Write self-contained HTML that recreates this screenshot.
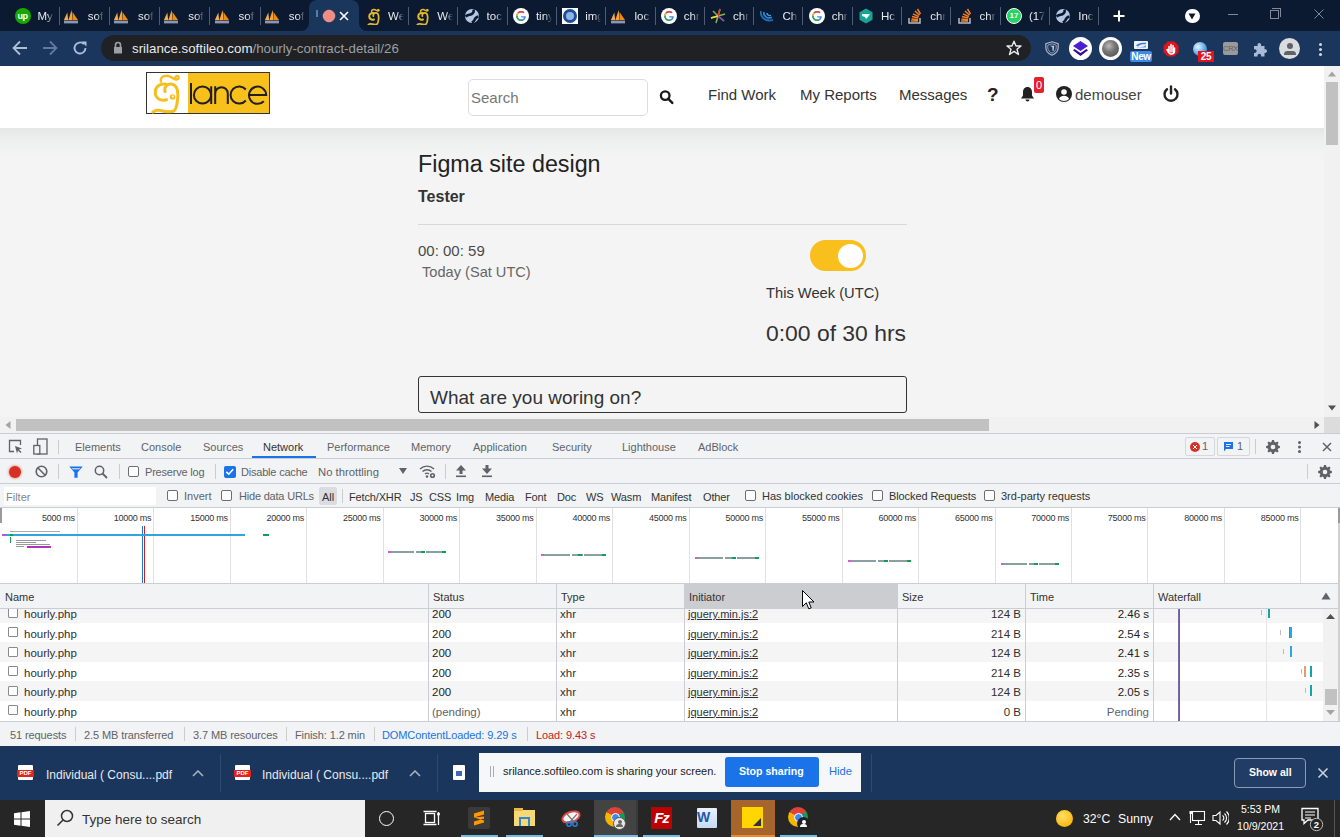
<!DOCTYPE html><html><head><meta charset="utf-8"><style>
*{box-sizing:border-box}
html,body{margin:0;padding:0}
body{width:1340px;height:837px;position:relative;overflow:hidden;font-family:"Liberation Sans",sans-serif;background:#f4f4f4}
.a{position:absolute}
.t{position:absolute;white-space:nowrap;line-height:1}
#tabs{left:0;top:0;width:1340px;height:31px;background:#0b1a31}
#tb{left:0;top:31px;width:1340px;height:35px;background:#1b365d}
#hdr{left:0;top:66px;width:1324px;height:62px;background:#fff}
#content{left:0;top:128px;width:1324px;height:289px;background:#f4f4f4}
#vsb{left:1324px;top:66px;width:16px;height:351px;background:#f1f1f1}
#hsb{left:0;top:417px;width:1340px;height:16px;background:#f1f1f1}
#dt{left:0;top:433px;width:1340px;height:313px;background:#fff}
#dl{left:0;top:746px;width:1340px;height:54px;background:#1b365d}
#task{left:0;top:800px;width:1340px;height:37px;background:#262626}
.sep{position:absolute;top:7px;width:1px;height:18px;background:#4e5d75}
.tl{position:absolute;top:9px;font-size:11.5px;color:#e8eaed;white-space:nowrap;overflow:hidden;line-height:14px;-webkit-mask-image:linear-gradient(to right,#000 55%,transparent 100%)}
</style></head><body>
<div id="tabs" class="a">
<div class="a" style="left:14.5px;top:8px;width:16px;height:16px;border-radius:50%;background:#14a800;color:#fff;font-size:9px;font-weight:bold;line-height:16px;text-align:center;letter-spacing:-0.5px">up</div>
<div class="tl" style="left:37.5px;width:16px">My</div>
<div class="sep" style="left:58.5px"></div>
<svg class="a" style="left:62.75px;top:9px" width="16" height="15" viewBox="0 0 16 15"><path d="M0.8 11.2L4.3 3.5L5.2 11.2Z" fill="#f2ad55"/><path d="M5.3 11.2L8.7 0.8L9.4 11.2Z" fill="#f6a538"/><path d="M9.5 11.2V3L15.2 11.2Z" fill="#ee8a12"/><rect x="1" y="11.8" width="14" height="2.6" fill="#8d97b5"/></svg>
<div class="tl" style="left:87.8px;width:16px">sof</div>
<div class="sep" style="left:108.8px"></div>
<svg class="a" style="left:113.0px;top:9px" width="16" height="15" viewBox="0 0 16 15"><path d="M0.8 11.2L4.3 3.5L5.2 11.2Z" fill="#f2ad55"/><path d="M5.3 11.2L8.7 0.8L9.4 11.2Z" fill="#f6a538"/><path d="M9.5 11.2V3L15.2 11.2Z" fill="#ee8a12"/><rect x="1" y="11.8" width="14" height="2.6" fill="#8d97b5"/></svg>
<div class="tl" style="left:138.0px;width:16px">sof</div>
<div class="sep" style="left:159.0px"></div>
<svg class="a" style="left:163.25px;top:9px" width="16" height="15" viewBox="0 0 16 15"><path d="M0.8 11.2L4.3 3.5L5.2 11.2Z" fill="#f2ad55"/><path d="M5.3 11.2L8.7 0.8L9.4 11.2Z" fill="#f6a538"/><path d="M9.5 11.2V3L15.2 11.2Z" fill="#ee8a12"/><rect x="1" y="11.8" width="14" height="2.6" fill="#8d97b5"/></svg>
<div class="tl" style="left:188.2px;width:16px">sof</div>
<div class="sep" style="left:209.2px"></div>
<svg class="a" style="left:213.5px;top:9px" width="16" height="15" viewBox="0 0 16 15"><path d="M0.8 11.2L4.3 3.5L5.2 11.2Z" fill="#f2ad55"/><path d="M5.3 11.2L8.7 0.8L9.4 11.2Z" fill="#f6a538"/><path d="M9.5 11.2V3L15.2 11.2Z" fill="#ee8a12"/><rect x="1" y="11.8" width="14" height="2.6" fill="#8d97b5"/></svg>
<div class="tl" style="left:238.5px;width:16px">sof</div>
<div class="sep" style="left:259.5px"></div>
<svg class="a" style="left:263.75px;top:9px" width="16" height="15" viewBox="0 0 16 15"><path d="M0.8 11.2L4.3 3.5L5.2 11.2Z" fill="#f2ad55"/><path d="M5.3 11.2L8.7 0.8L9.4 11.2Z" fill="#f6a538"/><path d="M9.5 11.2V3L15.2 11.2Z" fill="#ee8a12"/><rect x="1" y="11.8" width="14" height="2.6" fill="#8d97b5"/></svg>
<div class="tl" style="left:288.8px;width:16px">sof</div>
<svg class="a" style="left:366.5px;top:7.5px" width="13.5" height="17" viewBox="150 72 32 41"><g stroke="#e3b82a" fill="none" stroke-linecap="round"><path d="M161 81.5C160 77.5 163 75.5 167 75.8C171 76.2 173 79 176 79.5C178.5 79.8 179.5 77.5 178 76.3C176.5 75.2 174.8 76.8 175.5 78.8" stroke-width="3.5"/><path d="M165.5 84C159.5 83.2 155 87 155.2 92.8C155.5 98.5 160.5 101.5 166.5 99.8" stroke-width="5"/><path d="M165 91.5C164 86.5 167.5 83.5 171.5 84C176.5 84.8 178.2 90.5 177.8 97C177.4 103 177 107.5 174.5 110.5C171 113.5 164 111 159 110.3C156.5 110 154.5 110.8 153 112" stroke-width="4.2"/></g></svg>
<div class="tl" style="left:388.0px;width:16px">Wel</div>
<div class="sep" style="left:408.0px"></div>
<svg class="a" style="left:415.8px;top:7.5px" width="13.5" height="17" viewBox="150 72 32 41"><g stroke="#e3b82a" fill="none" stroke-linecap="round"><path d="M161 81.5C160 77.5 163 75.5 167 75.8C171 76.2 173 79 176 79.5C178.5 79.8 179.5 77.5 178 76.3C176.5 75.2 174.8 76.8 175.5 78.8" stroke-width="3.5"/><path d="M165.5 84C159.5 83.2 155 87 155.2 92.8C155.5 98.5 160.5 101.5 166.5 99.8" stroke-width="5"/><path d="M165 91.5C164 86.5 167.5 83.5 171.5 84C176.5 84.8 178.2 90.5 177.8 97C177.4 103 177 107.5 174.5 110.5C171 113.5 164 111 159 110.3C156.5 110 154.5 110.8 153 112" stroke-width="4.2"/></g></svg>
<div class="tl" style="left:437.3px;width:16px">Wel</div>
<div class="sep" style="left:457.3px"></div>
<svg class="a" style="left:463.6px;top:8px" width="16" height="16" viewBox="0 0 16 16"><circle cx="8" cy="8" r="7" fill="#b4c6e4"/><path d="M9.5 1.5C10.5 4.5 8 6.5 5.5 6.8C4 7 3 7.5 1.5 8.5" stroke="#0b1a31" stroke-width="2.6" fill="none"/><path d="M14.5 8.5C12 9 11 10.5 10.5 12C10 13.2 9 14 8 14.8" stroke="#0b1a31" stroke-width="2.6" fill="none"/></svg>
<div class="tl" style="left:486.6px;width:16px">toc</div>
<div class="sep" style="left:506.6px"></div>
<svg class="a" style="left:512.9px;top:8px" width="16" height="16" viewBox="0 0 16 16"><circle cx="8" cy="8" r="8" fill="#fff"/><path d="M12.5 8.2H8.2V9.6H11 C10.6 11 9.5 11.6 8.2 11.6 C6.2 11.6 4.6 10 4.6 8 C4.6 6 6.2 4.4 8.2 4.4 C9.1 4.4 9.9 4.7 10.5 5.3L11.5 4.3 C10.6 3.5 9.5 3 8.2 3 C5.4 3 3.2 5.2 3.2 8 C3.2 10.8 5.4 13 8.2 13 C11 13 12.8 11 12.8 8.3Z" fill="#4285f4"/><path d="M3.2 8 C3.2 6.5 3.8 5.2 4.8 4.3L5.8 5.4 C5.1 6 4.6 7 4.6 8Z" fill="#fbbc05"/><path d="M4.8 4.3 C5.7 3.5 6.9 3 8.2 3 C9.5 3 10.6 3.5 11.5 4.3L10.5 5.3 C9.9 4.7 9.1 4.4 8.2 4.4 C7.2 4.4 6.4 4.8 5.8 5.4Z" fill="#ea4335"/><path d="M4.6 8 C4.6 10 6.2 11.6 8.2 11.6 C9.2 11.6 10 11.3 10.6 10.7L11.6 11.6 C10.8 12.5 9.6 13 8.2 13 C5.4 13 3.2 10.8 3.2 8Z" fill="#34a853"/></svg>
<div class="tl" style="left:535.9px;width:16px">tiny</div>
<div class="sep" style="left:555.9px"></div>
<div class="a" style="left:562.2px;top:8px;width:16px;height:16px;background:#fff"><div class="a" style="left:1px;top:1px;width:14px;height:14px;border-radius:50%;background:#1d4e9a"></div><div class="a" style="left:4px;top:4px;width:8px;height:8px;border-radius:50%;background:#8fb5e8"></div></div>
<div class="tl" style="left:585.2px;width:16px">img</div>
<div class="sep" style="left:605.2px"></div>
<svg class="a" style="left:609.5px;top:9px" width="16" height="15" viewBox="0 0 16 15"><path d="M0.8 11.2L4.3 3.5L5.2 11.2Z" fill="#f2ad55"/><path d="M5.3 11.2L8.7 0.8L9.4 11.2Z" fill="#f6a538"/><path d="M9.5 11.2V3L15.2 11.2Z" fill="#ee8a12"/><rect x="1" y="11.8" width="14" height="2.6" fill="#8d97b5"/></svg>
<div class="tl" style="left:634.5px;width:16px">loc</div>
<div class="sep" style="left:654.5px"></div>
<svg class="a" style="left:660.8px;top:8px" width="16" height="16" viewBox="0 0 16 16"><circle cx="8" cy="8" r="8" fill="#fff"/><path d="M12.5 8.2H8.2V9.6H11 C10.6 11 9.5 11.6 8.2 11.6 C6.2 11.6 4.6 10 4.6 8 C4.6 6 6.2 4.4 8.2 4.4 C9.1 4.4 9.9 4.7 10.5 5.3L11.5 4.3 C10.6 3.5 9.5 3 8.2 3 C5.4 3 3.2 5.2 3.2 8 C3.2 10.8 5.4 13 8.2 13 C11 13 12.8 11 12.8 8.3Z" fill="#4285f4"/><path d="M3.2 8 C3.2 6.5 3.8 5.2 4.8 4.3L5.8 5.4 C5.1 6 4.6 7 4.6 8Z" fill="#fbbc05"/><path d="M4.8 4.3 C5.7 3.5 6.9 3 8.2 3 C9.5 3 10.6 3.5 11.5 4.3L10.5 5.3 C9.9 4.7 9.1 4.4 8.2 4.4 C7.2 4.4 6.4 4.8 5.8 5.4Z" fill="#ea4335"/><path d="M4.6 8 C4.6 10 6.2 11.6 8.2 11.6 C9.2 11.6 10 11.3 10.6 10.7L11.6 11.6 C10.8 12.5 9.6 13 8.2 13 C5.4 13 3.2 10.8 3.2 8Z" fill="#34a853"/></svg>
<div class="tl" style="left:683.8px;width:16px">chr</div>
<div class="sep" style="left:703.8px"></div>
<svg class="a" style="left:710.0999999999999px;top:8px" width="16" height="16" viewBox="0 0 16 16"><path d="M8 8 L3 3 M8 8 L10 1 M8 8 L15 6 M8 8 L14 13 M8 8 L6 15 M8 8 L1 10" stroke-width="1.6" stroke="#7cb342"/><path d="M8 8 L10 1" stroke="#e53935" stroke-width="1.6"/><path d="M8 8 L14 13" stroke="#8e44ad" stroke-width="1.6"/><path d="M8 8 L1 10" stroke="#fdd835" stroke-width="1.6"/></svg>
<div class="tl" style="left:733.1px;width:16px">chr</div>
<div class="sep" style="left:753.1px"></div>
<svg class="a" style="left:759.4px;top:8px" width="16" height="16" viewBox="0 0 16 16"><path d="M2 3 C1 9 6 14 14 12" stroke="#1f6fb5" stroke-width="1.8" fill="none"/><path d="M5 4 C4 8 8 11 13 9.5" stroke="#2b88d8" stroke-width="1.6" fill="none"/><path d="M8 5 C8 7 10 8 12 7.5" stroke="#3aa0e8" stroke-width="1.4" fill="none"/></svg>
<div class="tl" style="left:782.4px;width:16px">Ch</div>
<div class="sep" style="left:802.4px"></div>
<svg class="a" style="left:808.7px;top:8px" width="16" height="16" viewBox="0 0 16 16"><circle cx="8" cy="8" r="8" fill="#fff"/><path d="M12.5 8.2H8.2V9.6H11 C10.6 11 9.5 11.6 8.2 11.6 C6.2 11.6 4.6 10 4.6 8 C4.6 6 6.2 4.4 8.2 4.4 C9.1 4.4 9.9 4.7 10.5 5.3L11.5 4.3 C10.6 3.5 9.5 3 8.2 3 C5.4 3 3.2 5.2 3.2 8 C3.2 10.8 5.4 13 8.2 13 C11 13 12.8 11 12.8 8.3Z" fill="#4285f4"/><path d="M3.2 8 C3.2 6.5 3.8 5.2 4.8 4.3L5.8 5.4 C5.1 6 4.6 7 4.6 8Z" fill="#fbbc05"/><path d="M4.8 4.3 C5.7 3.5 6.9 3 8.2 3 C9.5 3 10.6 3.5 11.5 4.3L10.5 5.3 C9.9 4.7 9.1 4.4 8.2 4.4 C7.2 4.4 6.4 4.8 5.8 5.4Z" fill="#ea4335"/><path d="M4.6 8 C4.6 10 6.2 11.6 8.2 11.6 C9.2 11.6 10 11.3 10.6 10.7L11.6 11.6 C10.8 12.5 9.6 13 8.2 13 C5.4 13 3.2 10.8 3.2 8Z" fill="#34a853"/></svg>
<div class="tl" style="left:831.7px;width:16px">chr</div>
<div class="sep" style="left:851.7px"></div>
<svg class="a" style="left:858.0px;top:8px" width="16" height="16" viewBox="0 0 16 16"><path d="M8 0.5 L14.5 4.2 V11.8 L8 15.5 L1.5 11.8 V4.2Z" fill="#1aa394"/><path d="M4 6 H12 L10 9 L8 11 L7 9 L4 8Z" fill="#e8fff8"/></svg>
<div class="tl" style="left:881.0px;width:16px">Hc</div>
<div class="sep" style="left:901.0px"></div>
<svg class="a" style="left:907.3px;top:8px" width="16" height="16" viewBox="0 0 16 16"><path d="M2 10 V15 H13 V10" stroke="#bcbbbb" stroke-width="1.5" fill="none"/><path d="M4 13 H11 M4.5 11 L11 11.7 M5 8.5 L11.3 10 M6 5.8 L11.8 8.7 M8 3 L12.5 7.3 M10.5 1 L13.5 6" stroke="#f48024" stroke-width="1.5"/></svg>
<div class="tl" style="left:930.3px;width:16px">chr</div>
<div class="sep" style="left:950.3px"></div>
<svg class="a" style="left:956.5999999999999px;top:8px" width="16" height="16" viewBox="0 0 16 16"><path d="M2 10 V15 H13 V10" stroke="#bcbbbb" stroke-width="1.5" fill="none"/><path d="M4 13 H11 M4.5 11 L11 11.7 M5 8.5 L11.3 10 M6 5.8 L11.8 8.7 M8 3 L12.5 7.3 M10.5 1 L13.5 6" stroke="#f48024" stroke-width="1.5"/></svg>
<div class="tl" style="left:979.6px;width:16px">chr</div>
<div class="sep" style="left:999.6px"></div>
<div class="a" style="left:1005.9000000000001px;top:8px;width:16px;height:16px;border-radius:50%;background:#25d366;border:1.5px solid #fff;color:#fff;font-size:8px;font-weight:bold;line-height:13px;text-align:center">17</div>
<div class="tl" style="left:1028.9px;width:16px">(17</div>
<div class="sep" style="left:1048.9px"></div>
<svg class="a" style="left:1055.1999999999998px;top:8px" width="16" height="16" viewBox="0 0 16 16"><circle cx="8" cy="8" r="7" fill="#b4c6e4"/><path d="M9.5 1.5C10.5 4.5 8 6.5 5.5 6.8C4 7 3 7.5 1.5 8.5" stroke="#0b1a31" stroke-width="2.6" fill="none"/><path d="M14.5 8.5C12 9 11 10.5 10.5 12C10 13.2 9 14 8 14.8" stroke="#0b1a31" stroke-width="2.6" fill="none"/></svg>
<div class="tl" style="left:1078.2px;width:16px">Inc</div>
<div class="sep" style="left:1098.2px"></div>
<div class="a" style="left:309px;top:0;width:50px;height:31px;background:#1b365d;border-radius:8px 8px 0 0"></div>
<div class="a" style="left:301px;top:23px;width:8px;height:8px;background:#1b365d"><div class="a" style="left:0;top:0;width:8px;height:8px;background:#0b1a31;border-radius:0 0 8px 0"></div></div>
<div class="a" style="left:359px;top:23px;width:8px;height:8px;background:#1b365d"><div class="a" style="left:0;top:0;width:8px;height:8px;background:#0b1a31;border-radius:0 0 0 8px"></div></div>
<div class="a" style="left:316px;top:10px;width:2px;height:7px;background:#6f9ccf;opacity:.7"></div>
<div class="a" style="left:323px;top:10px;width:12px;height:12px;border-radius:50%;background:#f28b82;border:1.5px solid #e8a0a0;box-shadow:0 0 0 0.5px #a05050"></div>
<svg class="a" style="left:339px;top:11px" width="10" height="10" viewBox="0 0 10 10"><path d="M1 1L9 9M9 1L1 9" stroke="#fff" stroke-width="1.6"/></svg>
<svg class="a" style="left:1113px;top:10px" width="12" height="12" viewBox="0 0 12 12"><path d="M6 0.5V11.5M0.5 6H11.5" stroke="#fff" stroke-width="2"/></svg>
<div class="a" style="left:1185px;top:8.5px;width:14.5px;height:14.5px;border-radius:50%;background:#fff"></div>
<svg class="a" style="left:1188.2px;top:13px" width="8" height="7" viewBox="0 0 8 7"><path d="M0.5 0.5H7.5L4 6.5Z" fill="#0b1a31"/></svg>
<div class="a" style="left:1228px;top:14px;width:10px;height:1px;background:#7f8999"></div>
<div class="a" style="left:1270px;top:10px;width:9px;height:9px;border:1px solid #7f8999"></div><div class="a" style="left:1272px;top:8px;width:9px;height:9px;border-top:1px solid #7f8999;border-right:1px solid #7f8999"></div>
<svg class="a" style="left:1313.5px;top:8.5px" width="10" height="10" viewBox="0 0 10 10"><path d="M0.5 0.5L9.5 9.5M9.5 0.5L0.5 9.5" stroke="#7f8999" stroke-width="1"/></svg>
</div>
<div id="tb" class="a">
<svg class="a" style="left:12px;top:9px" width="16" height="16" viewBox="0 0 16 16"><path d="M15 8H2M8 1.5L1.5 8L8 14.5" stroke="#aebfd8" stroke-width="1.8" fill="none"/></svg>
<svg class="a" style="left:42px;top:9px" width="16" height="16" viewBox="0 0 16 16"><path d="M1 8H14M8 1.5L14.5 8L8 14.5" stroke="#5f7a9e" stroke-width="1.8" fill="none"/></svg>
<svg class="a" style="left:72px;top:9px" width="16" height="16" viewBox="0 0 16 16"><path d="M13.5 8A5.5 5.5 0 1 1 11.9 4.1" stroke="#aebfd8" stroke-width="1.8" fill="none"/><path d="M9.5 1.5H14.5V6.5Z" fill="#aebfd8"/></svg>
<div class="a" style="left:101px;top:4px;width:930px;height:26px;border-radius:13px;background:#202124"></div>
<svg class="a" style="left:113px;top:10px" width="10" height="13" viewBox="0 0 10 13"><path d="M2.5 6V4A2.5 2.5 0 0 1 7.5 4V6" stroke="#9aa0a6" stroke-width="1.6" fill="none"/><rect x="1" y="6" width="8" height="6.5" fill="#9aa0a6"/></svg>
<div class="t" style="left:132px;top:11px;font-size:13.3px;color:#e8eaed">srilance.softileo.com<span style="color:#9aa0a6">/hourly-contract-detail/26</span></div>
<svg class="a" style="left:1006px;top:9px" width="16" height="16" viewBox="0 0 16 16"><path d="M8 1.2L10 6H15L11 9.2L12.5 14.5L8 11.4L3.5 14.5L5 9.2L1 6H6Z" stroke="#e8eaed" stroke-width="1.4" fill="none" stroke-linejoin="round"/></svg>
<svg class="a" style="left:1044.5px;top:10px" width="14" height="15" viewBox="0 0 14 15"><path d="M7 0.8L13.2 2.8V6.5C13.2 10 10.5 12.8 7 14.3C3.5 12.8 0.8 10 0.8 6.5V2.8Z" stroke="#aeb6c4" stroke-width="1.2" fill="none"/><path d="M7 2.8L11.2 4.1V6.8C11.2 9.2 9.4 11.1 7 12.2C4.6 11.1 2.8 9.2 2.8 6.8V4.1Z" stroke="#aeb6c4" stroke-width="0.8" fill="none"/><path d="M4.8 4.8H9.2L8.6 10H7.6L7.3 6Z" fill="#c8ced8"/></svg>
<div class="a" style="left:1069px;top:6px;width:23px;height:23px;border-radius:50%;background:#fff"></div>
<svg class="a" style="left:1072px;top:10px" width="17" height="16" viewBox="0 0 17 16"><path d="M8.5 0L16 5L8.5 10L1 5Z" fill="#4b1fd0"/><path d="M2.5 8L8.5 12L14.5 8L16 9.3L8.5 15L1 9.3Z" fill="#2e0f9c"/></svg>
<div class="a" style="left:1099px;top:6px;width:23px;height:23px;border-radius:50%;background:#fff"></div>
<div class="a" style="left:1102px;top:9px;width:17px;height:17px;border-radius:50%;background:radial-gradient(circle at 40% 35%,#bbb 0,#777 40%,#555 80%,#888 100%)"></div>
<div class="a" style="left:1134px;top:10px;width:14px;height:8px;border-radius:1px;background:#eef3fb"></div>
<svg class="a" style="left:1134px;top:10px" width="14" height="8" viewBox="0 0 14 8"><path d="M2 4.5C5 1 10 2 12 1.5V3C9 3.5 6 3 4 5.5Z" fill="#3b7ddd"/><path d="M2 6.5C6 6 9 6.5 12 4V6.5Z" fill="#6aa0e8"/></svg>
<div class="a" style="left:1130px;top:19.5px;width:22px;height:11px;border-radius:2px;background:#3d8ae8;color:#fff;font-size:10px;font-weight:bold;line-height:11px;text-align:center;letter-spacing:-0.4px">New</div>
<svg class="a" style="left:1163px;top:9.5px" width="16" height="16" viewBox="0 0 16 16"><path d="M4.7 0.5H11.3L15.5 4.7V11.3L11.3 15.5H4.7L0.5 11.3V4.7Z" fill="#e0121b"/><path d="M6 11.5V5.5M8 11V3.5M10 11V4.5M6 9C5 8.5 4.3 8 4 8.8C5 10.5 6 13 8.5 13C10.5 13 11.5 11.5 11.5 10V7" stroke="#fff" stroke-width="1.5" fill="none" stroke-linecap="round"/></svg>
<div class="a" style="left:1193px;top:11px;width:14px;height:14px;border-radius:50%;background:radial-gradient(circle at 35% 35%,#e8f4ff,#5aa8e8 55%,#1f6fb0)"></div>
<div class="a" style="left:1198px;top:19.5px;width:16px;height:11px;background:#e2141f;color:#fff;font-size:10px;font-weight:bold;line-height:11px;text-align:center;letter-spacing:-0.3px">25</div>
<div class="a" style="left:1223px;top:11px;width:15px;height:13px;background:#9a9a9a;border-radius:2px;color:#5f5f5f;font-size:7.5px;line-height:13px;text-align:center;letter-spacing:-0.3px">CRX</div>
<svg class="a" style="left:1253px;top:10.5px" width="15" height="15" viewBox="0 0 15 15"><path d="M1 4H4.5V2.8A1.8 1.8 0 0 1 8.1 2.8V4H11.5V7.3H12.3A1.8 1.8 0 0 1 12.3 10.9H11.5V14.5H8.1V13.6A1.8 1.8 0 0 0 4.5 13.6V14.5H1V10.9H1.9A1.8 1.8 0 0 0 1.9 7.3H1Z" fill="#a8bcd8"/></svg>
<div class="a" style="left:1279px;top:7px;width:21px;height:21px;border-radius:50%;background:#dadce0;overflow:hidden"><div class="a" style="left:7.5px;top:5px;width:6px;height:6px;border-radius:50%;background:#5f6368"></div><div class="a" style="left:4.5px;top:12.5px;width:12px;height:4.5px;border-radius:6px 6px 1px 1px;background:#5f6368"></div></div>
<div class="a" style="left:1318.5px;top:11.5px;width:3px;height:3px;border-radius:50%;background:#cfd8e6;box-shadow:0 5px 0 #cfd8e6,0 10px 0 #cfd8e6"></div>
</div>
<div id="hdr" class="a"></div>
<div id="content" class="a" style="background:linear-gradient(#e5e6e6 0,#ebecec 8px,#f0f1f1 18px,#f4f4f4 32px)"></div>
<div class="a" style="left:146px;top:72px;width:124px;height:42px;border:1px solid #333;background:#fff"></div>
<div class="a" style="left:188px;top:73px;width:81px;height:40px;background:#f8c01a"></div>
<svg class="a" style="left:146px;top:72px" width="124" height="42" viewBox="146 72 124 42"><g stroke="#f5bf22" fill="none" stroke-linecap="round"><path d="M161 81.5C160 77.5 163 75.5 167 75.8C171 76.2 173 79 176 79.5C178.5 79.8 179.5 77.5 178 76.3C176.5 75.2 174.8 76.8 175.5 78.8" stroke-width="2.4"/><path d="M165.5 84C159.5 83.2 155 87 155.2 92.8C155.5 98.5 160.5 101.5 166.5 99.8" stroke-width="3"/><path d="M165 91.5C164 86.5 167.5 83.5 171.5 84C176.5 84.8 178.2 90.5 177.8 97C177.4 103 177 107.5 174.5 110.5C171 113.5 164 111 159 110.3C156.5 110 154.5 110.8 153 112" stroke-width="3.1"/></g><circle cx="172.5" cy="97" r="2.8" fill="#f5bf22"/><circle cx="172.8" cy="96.6" r="1" fill="#fff"/></svg>
<svg class="a" style="left:188px;top:73px" width="81" height="40" viewBox="188 73 81 40"><g stroke="#231f20" stroke-width="2" fill="none"><path d="M191 83V104"/><circle cx="202.5" cy="95" r="8.6"/><path d="M211.2 86.3V104"/><path d="M215.2 104V86.3M215.2 93.5A6.3 6.3 0 0 1 227.8 93.5V104"/><path d="M245.8 89.5A8.6 8.6 0 1 0 245.8 100.5"/><path d="M249.5 95H266.2A8.6 8.6 0 1 0 263.8 101.2"/></g></svg>
<div class="a" style="left:468px;top:79px;width:180px;height:37px;border:1px solid #dcdcdc;border-radius:5px;background:#fff"></div>
<div class="t" style="left:471px;top:90px;font-size:15px;color:#777">Search</div>
<svg class="a" style="left:658px;top:89px" width="17" height="17" viewBox="0 0 17 17"><circle cx="7.2" cy="6.6" r="4.3" stroke="#1a1a1a" stroke-width="2.3" fill="none"/><path d="M10.3 9.8L14.3 13.8" stroke="#1a1a1a" stroke-width="2.5" stroke-linecap="round"/></svg>
<div class="t" style="left:708px;top:87px;font-size:15px;color:#333">Find Work</div>
<div class="t" style="left:800px;top:87px;font-size:15px;color:#333">My Reports</div>
<div class="t" style="left:899px;top:87px;font-size:15px;color:#333">Messages</div>
<div class="t" style="left:987px;top:85px;font-size:19px;font-weight:bold;color:#222">?</div>
<svg class="a" style="left:1020px;top:86px" width="15" height="16" viewBox="0 0 15 16"><path d="M7.5 1 C4.5 1 3 3.5 3 6 V9.5 L1 12.5 H14 L12 9.5 V6 C12 3.5 10.5 1 7.5 1Z" fill="#222"/><path d="M5.5 13.5 A2 2 0 0 0 9.5 13.5Z" fill="#222"/></svg>
<div class="a" style="left:1034px;top:77px;width:10px;height:16px;background:#e5202d;border-radius:2px;color:#fff;font-size:11px;line-height:16px;text-align:center">0</div>
<svg class="a" style="left:1056px;top:86px" width="16" height="16" viewBox="0 0 16 16"><circle cx="8" cy="8" r="8" fill="#222"/><circle cx="8" cy="6" r="2.8" fill="#fff"/><path d="M3 12.8 C4 10.5 6 9.8 8 9.8 C10 9.8 12 10.5 13 12.8 C11.8 14.2 10 15 8 15 C6 15 4.2 14.2 3 12.8Z" fill="#fff"/></svg>
<div class="t" style="left:1075px;top:87px;font-size:15px;color:#444">demouser</div>
<svg class="a" style="left:1162px;top:85px" width="18" height="18" viewBox="0 0 18 18"><path d="M5 4.2 A6.5 6.5 0 1 0 13 4.2" stroke="#222" stroke-width="2.4" fill="none" stroke-linecap="round"/><path d="M9 1.5V8.5" stroke="#222" stroke-width="2.4" stroke-linecap="round"/></svg>
<div class="t" style="left:418px;top:153px;font-size:23.3px;color:#222">Figma site design</div>
<div class="t" style="left:418px;top:189px;font-size:16px;font-weight:bold;color:#333">Tester</div>
<div class="a" style="left:418px;top:224px;width:489px;height:1px;background:#d8d8d8"></div>
<div class="t" style="left:418px;top:243px;font-size:15px;color:#4a4a4a">00: 00: 59</div>
<div class="t" style="left:418px;top:265px;font-size:14.6px;color:#666">&nbsp;Today (Sat UTC)</div>
<div class="a" style="left:810px;top:240px;width:56px;height:31px;border-radius:16px;background:#f8bf1d"></div>
<div class="a" style="left:838px;top:243.5px;width:24.5px;height:24px;border-radius:50%;background:#fff"></div>
<div class="t" style="left:766px;top:286px;font-size:14.7px;color:#333">This Week (UTC)</div>
<div class="t" style="left:766px;top:322px;font-size:22.9px;color:#333">0:00 of 30 hrs</div>
<div class="a" style="left:418px;top:376px;width:489px;height:37px;border:1px solid #333;border-radius:3px;background:#f4f4f4"></div>
<div class="t" style="left:430px;top:388px;font-size:19px;color:#333">What are you woring on?</div>
<div id="vsb" class="a"></div>
<svg class="a" style="left:1327px;top:71px" width="10" height="6" viewBox="0 0 10 6"><path d="M5 0.5L9 5.5H1Z" fill="#a3a3a3"/></svg>
<div class="a" style="left:1326px;top:82px;width:12px;height:63px;background:#c1c1c1"></div>
<svg class="a" style="left:1327px;top:405px" width="10" height="6" viewBox="0 0 10 6"><path d="M5 5.5L9 0.5H1Z" fill="#505050"/></svg>
<div id="hsb" class="a"></div>
<svg class="a" style="left:5px;top:420px" width="6" height="10" viewBox="0 0 6 10"><path d="M0.5 5L5.5 1V9Z" fill="#a3a3a3"/></svg>
<div class="a" style="left:16px;top:419px;width:973px;height:12px;background:#c1c1c1"></div>
<svg class="a" style="left:1314px;top:420px" width="6" height="10" viewBox="0 0 6 10"><path d="M5.5 5L0.5 1V9Z" fill="#505050"/></svg>
<div class="a" style="left:1324px;top:417px;width:16px;height:16px;background:#dcdcdc"></div>
<div class="a" style="left:0;top:433px;width:1340px;height:313px;background:#fff"></div>
<div class="a" style="left:0;top:433px;width:1340px;height:26px;background:#f1f3f4;border-top:1px solid #cacdd1;border-bottom:1px solid #cacdd1"></div>
<svg class="a" style="left:8px;top:439px" width="15" height="15" viewBox="0 0 15 15"><path d="M6 12.5H1.5V1.5H12.5V6" stroke="#5f6368" stroke-width="1.3" fill="none"/><path d="M7 7L14 9.5L11 10.5L13.5 13L12.5 14L10 11.5L9 14.5Z" fill="#5f6368"/></svg>
<svg class="a" style="left:33px;top:438px" width="15" height="17" viewBox="0 0 15 17"><rect x="4.5" y="1" width="9.5" height="15" stroke="#5f6368" stroke-width="1.3" fill="none"/><rect x="0.8" y="7.5" width="6" height="8.5" stroke="#5f6368" stroke-width="1.3" fill="#f1f3f4"/></svg>
<div class="a" style="left:58px;top:440px;width:1px;height:14px;background:#ccc"></div>
<div class="t" style="left:75px;top:442px;font-size:11px;color:#5f6368">Elements</div>
<div class="t" style="left:141px;top:442px;font-size:11px;color:#5f6368">Console</div>
<div class="t" style="left:203px;top:442px;font-size:11px;color:#5f6368">Sources</div>
<div class="t" style="left:263px;top:442px;font-size:11px;color:#333">Network</div>
<div class="t" style="left:327px;top:442px;font-size:11px;color:#5f6368">Performance</div>
<div class="t" style="left:411px;top:442px;font-size:11px;color:#5f6368">Memory</div>
<div class="t" style="left:473px;top:442px;font-size:11px;color:#5f6368">Application</div>
<div class="t" style="left:552px;top:442px;font-size:11px;color:#5f6368">Security</div>
<div class="t" style="left:622px;top:442px;font-size:11px;color:#5f6368">Lighthouse</div>
<div class="t" style="left:698px;top:442px;font-size:11px;color:#5f6368">AdBlock</div>
<div class="a" style="left:252px;top:456px;width:64px;height:2px;background:#1a73e8"></div>
<div class="a" style="left:1185px;top:437px;width:30px;height:19px;border:1px solid #d5d7da;border-radius:2px"></div>
<div class="a" style="left:1190px;top:442px;width:10px;height:10px;border-radius:50%;background:#d93025"></div>
<svg class="a" style="left:1192px;top:444px" width="6" height="6" viewBox="0 0 6 6"><path d="M1 1L5 5M5 1L1 5" stroke="#fff" stroke-width="1"/></svg>
<div class="t" style="left:1202px;top:441px;font-size:11px;color:#5f6368">1</div>
<div class="a" style="left:1217px;top:437px;width:33px;height:19px;border:1px solid #d5d7da;border-radius:2px"></div>
<svg class="a" style="left:1223px;top:441px" width="11" height="11" viewBox="0 0 11 11"><path d="M1 1H10V8H3L1 10.5Z" fill="#1a73e8"/><path d="M3 3.5H8M3 5.5H6.5" stroke="#fff" stroke-width="0.9"/></svg>
<div class="t" style="left:1237px;top:441px;font-size:11px;color:#5f6368">1</div>
<div class="a" style="left:1255px;top:439px;width:1px;height:15px;background:#ccc"></div>
<svg class="a" style="left:1266px;top:440px" width="14" height="14" viewBox="0 0 14 14"><path d="M6 0.5H8L8.4 2.3L9.6 2.9L11.2 1.9L12.6 3.3L11.6 4.9L12.1 6.1L13.9 6.5V8.5L12.1 8.9L11.6 10.1L12.6 11.7L11.2 13.1L9.6 12.1L8.4 12.7L8 14.5H6L5.6 12.7L4.4 12.1L2.8 13.1L1.4 11.7L2.4 10.1L1.9 8.9L0.1 8.5V6.5L1.9 6.1L2.4 4.9L1.4 3.3L2.8 1.9L4.4 2.9L5.6 2.3Z" fill="#5f6368" transform="translate(0,-0.5)"/><circle cx="7" cy="7" r="2.3" fill="#f1f3f4"/></svg>
<div class="a" style="left:1298px;top:441px;width:3px;height:3px;border-radius:50%;background:#5f6368;box-shadow:0 4.5px 0 #5f6368,0 9px 0 #5f6368"></div>
<svg class="a" style="left:1322px;top:442px" width="10" height="10" viewBox="0 0 10 10"><path d="M1 1L9 9M9 1L1 9" stroke="#5f6368" stroke-width="1.5"/></svg>
<div class="a" style="left:0;top:459px;width:1340px;height:25px;background:#f1f3f4;border-bottom:1px solid #cacdd1"></div>
<div class="a" style="left:9px;top:466px;width:12px;height:12px;border-radius:50%;background:#d93025;box-shadow:0 0 2px 1px rgba(217,48,37,.35)"></div>
<svg class="a" style="left:35px;top:465px" width="13" height="13" viewBox="0 0 13 13"><circle cx="6.5" cy="6.5" r="5.3" stroke="#5f6368" stroke-width="1.6" fill="none"/><path d="M2.8 2.8L10.2 10.2" stroke="#5f6368" stroke-width="1.6"/></svg>
<div class="a" style="left:58px;top:464px;width:1px;height:15px;background:#ccc"></div>
<svg class="a" style="left:69px;top:466px" width="14" height="13" viewBox="0 0 14 13"><path d="M0.3 0.5H13.7L8.6 6.5V11.8L5.4 11.8V6.5Z" fill="#1a73e8"/><path d="M2.6 2H11.4L10.3 3.5H3.7Z" fill="#a8c7fa"/></svg>
<svg class="a" style="left:94px;top:465px" width="14" height="14" viewBox="0 0 14 14"><circle cx="5.5" cy="5.5" r="4.2" stroke="#5f6368" stroke-width="1.5" fill="none"/><path d="M8.5 8.5L13 13" stroke="#5f6368" stroke-width="1.8"/></svg>
<div class="a" style="left:119px;top:464px;width:1px;height:15px;background:#ccc"></div>
<div class="a" style="left:128px;top:466px;width:11px;height:11px;border-radius:2px;border:1px solid #6e6e6e;background:#fff"></div>
<div class="t" style="left:145px;top:467px;font-size:11px;color:#5f6368;letter-spacing:-0.2px">Preserve log</div>
<div class="a" style="left:215px;top:464px;width:1px;height:15px;background:#ccc"></div>
<div class="a" style="left:224px;top:466px;width:11.5px;height:11.5px;border-radius:2px;background:#1a73e8"></div><svg class="a" style="left:224px;top:466px" width="12" height="12" viewBox="0 0 12 12"><path d="M2.3 5.8L4.8 8.2L9.2 3.3" stroke="#fff" stroke-width="1.6" fill="none"/></svg>
<div class="t" style="left:241px;top:467px;font-size:11px;color:#5f6368;letter-spacing:-0.2px">Disable cache</div>
<div class="t" style="left:318px;top:467px;font-size:11.3px;color:#5f6368">No throttling</div>
<svg class="a" style="left:399px;top:468px" width="8" height="6" viewBox="0 0 8 6"><path d="M0 0H8L4 6Z" fill="#5f6368"/></svg>
<svg class="a" style="left:419px;top:464px" width="17" height="15" viewBox="0 0 17 15"><path d="M1 5A10 10 0 0 1 15 5M3.5 7.5A6.5 6.5 0 0 1 12.5 7.5M6 10A3 3 0 0 1 10 10" stroke="#5f6368" stroke-width="1.4" fill="none"/><circle cx="8" cy="12.5" r="1.3" fill="#5f6368"/><circle cx="13.5" cy="11.5" r="2.6" fill="#5f6368"/><circle cx="13.5" cy="11.5" r="1" fill="#f1f3f4"/></svg>
<div class="a" style="left:445px;top:464px;width:1px;height:15px;background:#ccc"></div>
<svg class="a" style="left:455px;top:464px" width="12" height="14" viewBox="0 0 12 14"><path d="M6 1L11 6.5H7.5V10H4.5V6.5H1Z" fill="#5f6368"/><rect x="1" y="11.5" width="10" height="1.6" fill="#5f6368"/></svg>
<svg class="a" style="left:481px;top:464px" width="12" height="14" viewBox="0 0 12 14"><path d="M6 10L11 4.5H7.5V1H4.5V4.5H1Z" fill="#5f6368"/><rect x="1" y="11.5" width="10" height="1.6" fill="#5f6368"/></svg>
<div class="a" style="left:1307px;top:464px;width:1px;height:15px;background:#ccc"></div>
<svg class="a" style="left:1318px;top:465px" width="14" height="14" viewBox="0 0 14 14"><path d="M6 0.5H8L8.4 2.3L9.6 2.9L11.2 1.9L12.6 3.3L11.6 4.9L12.1 6.1L13.9 6.5V8.5L12.1 8.9L11.6 10.1L12.6 11.7L11.2 13.1L9.6 12.1L8.4 12.7L8 14.5H6L5.6 12.7L4.4 12.1L2.8 13.1L1.4 11.7L2.4 10.1L1.9 8.9L0.1 8.5V6.5L1.9 6.1L2.4 4.9L1.4 3.3L2.8 1.9L4.4 2.9L5.6 2.3Z" fill="#5f6368" transform="translate(0,-0.5)"/><circle cx="7" cy="7" r="2.3" fill="#f1f3f4"/></svg>
<div class="a" style="left:0;top:484px;width:1340px;height:24px;background:#f1f3f4;border-bottom:1px solid #cacdd1"></div>
<div class="a" style="left:4px;top:487px;width:152px;height:18px;background:#fff"></div>
<div class="t" style="left:6px;top:492px;font-size:11px;color:#80868b">Filter</div>
<div class="a" style="left:167px;top:490px;width:11px;height:11px;border-radius:2px;border:1px solid #6e6e6e;background:#fff"></div>
<div class="t" style="left:184px;top:491px;font-size:11px;color:#5f6368">Invert</div>
<div class="a" style="left:221px;top:490px;width:11px;height:11px;border-radius:2px;border:1px solid #6e6e6e;background:#fff"></div>
<div class="t" style="left:239px;top:491px;font-size:11px;color:#5f6368;letter-spacing:-0.2px">Hide data URLs</div>
<div class="a" style="left:319px;top:487px;width:18px;height:18px;border-radius:2px;background:#dadce0"></div>
<div class="t" style="left:322px;top:492px;font-size:11px;color:#333">All</div>
<div class="a" style="left:342px;top:489px;width:1px;height:14px;background:#ccc"></div>
<div class="t" style="left:349px;top:492px;font-size:11px;color:#333;letter-spacing:-0.15px">Fetch/XHR</div>
<div class="t" style="left:410px;top:492px;font-size:11px;color:#333;letter-spacing:-0.15px">JS</div>
<div class="t" style="left:429px;top:492px;font-size:11px;color:#333;letter-spacing:-0.15px">CSS</div>
<div class="t" style="left:456px;top:492px;font-size:11px;color:#333;letter-spacing:-0.15px">Img</div>
<div class="t" style="left:485px;top:492px;font-size:11px;color:#333;letter-spacing:-0.15px">Media</div>
<div class="t" style="left:525px;top:492px;font-size:11px;color:#333;letter-spacing:-0.15px">Font</div>
<div class="t" style="left:557px;top:492px;font-size:11px;color:#333;letter-spacing:-0.15px">Doc</div>
<div class="t" style="left:586px;top:492px;font-size:11px;color:#333;letter-spacing:-0.15px">WS</div>
<div class="t" style="left:611px;top:492px;font-size:11px;color:#333;letter-spacing:-0.15px">Wasm</div>
<div class="t" style="left:651px;top:492px;font-size:11px;color:#333;letter-spacing:-0.15px">Manifest</div>
<div class="t" style="left:703px;top:492px;font-size:11px;color:#333;letter-spacing:-0.15px">Other</div>
<div class="a" style="left:745px;top:490px;width:11px;height:11px;border-radius:2px;border:1px solid #6e6e6e;background:#fff"></div>
<div class="t" style="left:762px;top:491px;font-size:11px;color:#333">Has blocked cookies</div>
<div class="a" style="left:872px;top:490px;width:11px;height:11px;border-radius:2px;border:1px solid #6e6e6e;background:#fff"></div>
<div class="t" style="left:889px;top:491px;font-size:11px;color:#333;letter-spacing:-0.1px">Blocked Requests</div>
<div class="a" style="left:984px;top:490px;width:11px;height:11px;border-radius:2px;border:1px solid #6e6e6e;background:#fff"></div>
<div class="t" style="left:1001px;top:491px;font-size:11px;color:#333">3rd-party requests</div>
<div class="a" style="left:0;top:508px;width:2px;height:15px;background:#9a9a9a"></div>
<div class="a" style="left:76.7px;top:508px;width:1px;height:75px;background:#e0e0e0"></div>
<div class="t" style="left:-2.3px;width:77px;text-align:right;top:513.5px;font-size:9px;letter-spacing:-0.25px;color:#333">5000 ms</div>
<div class="a" style="left:153.2px;top:508px;width:1px;height:75px;background:#e0e0e0"></div>
<div class="t" style="left:74.2px;width:77px;text-align:right;top:513.5px;font-size:9px;letter-spacing:-0.25px;color:#333">10000 ms</div>
<div class="a" style="left:229.7px;top:508px;width:1px;height:75px;background:#e0e0e0"></div>
<div class="t" style="left:150.7px;width:77px;text-align:right;top:513.5px;font-size:9px;letter-spacing:-0.25px;color:#333">15000 ms</div>
<div class="a" style="left:306.1px;top:508px;width:1px;height:75px;background:#e0e0e0"></div>
<div class="t" style="left:227.1px;width:77px;text-align:right;top:513.5px;font-size:9px;letter-spacing:-0.25px;color:#333">20000 ms</div>
<div class="a" style="left:382.6px;top:508px;width:1px;height:75px;background:#e0e0e0"></div>
<div class="t" style="left:303.6px;width:77px;text-align:right;top:513.5px;font-size:9px;letter-spacing:-0.25px;color:#333">25000 ms</div>
<div class="a" style="left:459.1px;top:508px;width:1px;height:75px;background:#e0e0e0"></div>
<div class="t" style="left:380.1px;width:77px;text-align:right;top:513.5px;font-size:9px;letter-spacing:-0.25px;color:#333">30000 ms</div>
<div class="a" style="left:535.6px;top:508px;width:1px;height:75px;background:#e0e0e0"></div>
<div class="t" style="left:456.6px;width:77px;text-align:right;top:513.5px;font-size:9px;letter-spacing:-0.25px;color:#333">35000 ms</div>
<div class="a" style="left:612.1px;top:508px;width:1px;height:75px;background:#e0e0e0"></div>
<div class="t" style="left:533.1px;width:77px;text-align:right;top:513.5px;font-size:9px;letter-spacing:-0.25px;color:#333">40000 ms</div>
<div class="a" style="left:688.5px;top:508px;width:1px;height:75px;background:#e0e0e0"></div>
<div class="t" style="left:609.5px;width:77px;text-align:right;top:513.5px;font-size:9px;letter-spacing:-0.25px;color:#333">45000 ms</div>
<div class="a" style="left:765.0px;top:508px;width:1px;height:75px;background:#e0e0e0"></div>
<div class="t" style="left:686.0px;width:77px;text-align:right;top:513.5px;font-size:9px;letter-spacing:-0.25px;color:#333">50000 ms</div>
<div class="a" style="left:841.5px;top:508px;width:1px;height:75px;background:#e0e0e0"></div>
<div class="t" style="left:762.5px;width:77px;text-align:right;top:513.5px;font-size:9px;letter-spacing:-0.25px;color:#333">55000 ms</div>
<div class="a" style="left:918.0px;top:508px;width:1px;height:75px;background:#e0e0e0"></div>
<div class="t" style="left:839.0px;width:77px;text-align:right;top:513.5px;font-size:9px;letter-spacing:-0.25px;color:#333">60000 ms</div>
<div class="a" style="left:994.5px;top:508px;width:1px;height:75px;background:#e0e0e0"></div>
<div class="t" style="left:915.5px;width:77px;text-align:right;top:513.5px;font-size:9px;letter-spacing:-0.25px;color:#333">65000 ms</div>
<div class="a" style="left:1070.9px;top:508px;width:1px;height:75px;background:#e0e0e0"></div>
<div class="t" style="left:991.9px;width:77px;text-align:right;top:513.5px;font-size:9px;letter-spacing:-0.25px;color:#333">70000 ms</div>
<div class="a" style="left:1147.4px;top:508px;width:1px;height:75px;background:#e0e0e0"></div>
<div class="t" style="left:1068.4px;width:77px;text-align:right;top:513.5px;font-size:9px;letter-spacing:-0.25px;color:#333">75000 ms</div>
<div class="a" style="left:1223.9px;top:508px;width:1px;height:75px;background:#e0e0e0"></div>
<div class="t" style="left:1144.9px;width:77px;text-align:right;top:513.5px;font-size:9px;letter-spacing:-0.25px;color:#333">80000 ms</div>
<div class="a" style="left:1300.4px;top:508px;width:1px;height:75px;background:#e0e0e0"></div>
<div class="t" style="left:1221.4px;width:77px;text-align:right;top:513.5px;font-size:9px;letter-spacing:-0.25px;color:#333">85000 ms</div>
<div class="a" style="left:142px;top:526px;width:1px;height:57px;background:#1a73e8"></div>
<div class="a" style="left:144px;top:526px;width:1px;height:57px;background:#c5221f"></div>
<div class="a" style="left:2px;top:534px;width:243px;height:2px;background:#2ea5dc"></div>
<div class="a" style="left:2px;top:534px;width:4px;height:2px;background:#c94fd0"></div>
<div class="a" style="left:10px;top:534px;width:3px;height:2px;background:#0f9d58"></div>
<div class="a" style="left:263px;top:534px;width:6px;height:2px;background:#0f9d58"></div>
<div class="a" style="left:10px;top:531px;width:50px;height:1px;background:#aaa"></div>
<div class="a" style="left:16px;top:540px;width:30px;height:1px;background:#999"></div>
<div class="a" style="left:16px;top:542px;width:20px;height:1px;background:#999"></div>
<div class="a" style="left:16px;top:544px;width:34px;height:1px;background:#999"></div>
<div class="a" style="left:27px;top:546px;width:24px;height:2px;background:#b430c0"></div>
<div class="a" style="left:16px;top:546px;width:8px;height:1px;background:#999"></div>
<div class="a" style="left:10px;top:537px;width:1px;height:6px;background:#0f9d58"></div>
<div class="a" style="left:388px;top:551px;width:58px;height:2px;background:#8aa0a0"></div>
<div class="a" style="left:388px;top:551px;width:3px;height:2px;background:#d060d0"></div>
<div class="a" style="left:414px;top:551px;width:2px;height:2px;background:#fff"></div>
<div class="a" style="left:421px;top:551px;width:4px;height:2px;background:#0f9d58"></div>
<div class="a" style="left:425px;top:551px;width:1px;height:2px;background:#fff"></div>
<div class="a" style="left:442px;top:551px;width:4px;height:2px;background:#0f9d58"></div>
<div class="a" style="left:541px;top:554px;width:65px;height:2px;background:#8aa0a0"></div>
<div class="a" style="left:541px;top:554px;width:3px;height:2px;background:#d060d0"></div>
<div class="a" style="left:570px;top:554px;width:2px;height:2px;background:#fff"></div>
<div class="a" style="left:578px;top:554px;width:4px;height:2px;background:#0f9d58"></div>
<div class="a" style="left:583px;top:554px;width:1px;height:2px;background:#fff"></div>
<div class="a" style="left:602px;top:554px;width:4px;height:2px;background:#0f9d58"></div>
<div class="a" style="left:695px;top:557px;width:64px;height:2px;background:#8aa0a0"></div>
<div class="a" style="left:695px;top:557px;width:3px;height:2px;background:#d060d0"></div>
<div class="a" style="left:723px;top:557px;width:2px;height:2px;background:#fff"></div>
<div class="a" style="left:732px;top:557px;width:4px;height:2px;background:#0f9d58"></div>
<div class="a" style="left:736px;top:557px;width:1px;height:2px;background:#fff"></div>
<div class="a" style="left:755px;top:557px;width:4px;height:2px;background:#0f9d58"></div>
<div class="a" style="left:848px;top:560px;width:63px;height:2px;background:#8aa0a0"></div>
<div class="a" style="left:848px;top:560px;width:3px;height:2px;background:#d060d0"></div>
<div class="a" style="left:876px;top:560px;width:2px;height:2px;background:#fff"></div>
<div class="a" style="left:884px;top:560px;width:4px;height:2px;background:#0f9d58"></div>
<div class="a" style="left:888px;top:560px;width:1px;height:2px;background:#fff"></div>
<div class="a" style="left:907px;top:560px;width:4px;height:2px;background:#0f9d58"></div>
<div class="a" style="left:1001px;top:563px;width:58px;height:2px;background:#8aa0a0"></div>
<div class="a" style="left:1001px;top:563px;width:3px;height:2px;background:#d060d0"></div>
<div class="a" style="left:1027px;top:563px;width:2px;height:2px;background:#fff"></div>
<div class="a" style="left:1034px;top:563px;width:4px;height:2px;background:#0f9d58"></div>
<div class="a" style="left:1038px;top:563px;width:1px;height:2px;background:#fff"></div>
<div class="a" style="left:1055px;top:563px;width:4px;height:2px;background:#0f9d58"></div>
<div class="a" style="left:1338px;top:508px;width:2px;height:75px;background:#d0d0d0"></div>
<div class="a" style="left:1338px;top:508px;width:2px;height:15px;background:#9a9a9a"></div>
<div class="a" style="left:0;top:583px;width:1340px;height:26px;background:#f1f3f4;border-top:1px solid #cacdd1;border-bottom:1px solid #cacdd1"></div>
<div class="a" style="left:684px;top:584px;width:213px;height:24px;background:#cbcdd1"></div>
<div class="t" style="left:5px;top:592px;font-size:11px;color:#333">Name</div>
<div class="a" style="left:428px;top:584px;width:1px;height:137px;background:#cacdd1"></div>
<div class="t" style="left:433px;top:592px;font-size:11px;color:#333">Status</div>
<div class="a" style="left:556px;top:584px;width:1px;height:137px;background:#cacdd1"></div>
<div class="t" style="left:561px;top:592px;font-size:11px;color:#333">Type</div>
<div class="a" style="left:684px;top:584px;width:1px;height:137px;background:#cacdd1"></div>
<div class="t" style="left:689px;top:592px;font-size:11px;color:#333">Initiator</div>
<div class="a" style="left:897px;top:584px;width:1px;height:137px;background:#cacdd1"></div>
<div class="t" style="left:902px;top:592px;font-size:11px;color:#333">Size</div>
<div class="a" style="left:1025px;top:584px;width:1px;height:137px;background:#cacdd1"></div>
<div class="t" style="left:1030px;top:592px;font-size:11px;color:#333">Time</div>
<div class="a" style="left:1153px;top:584px;width:1px;height:137px;background:#cacdd1"></div>
<div class="t" style="left:1158px;top:592px;font-size:11px;color:#333">Waterfall</div>
<svg class="a" style="left:1321px;top:592px" width="10" height="8" viewBox="0 0 10 8"><path d="M5 0.5L9.5 7.5H0.5Z" fill="#5f6368"/></svg>
<div class="a" style="left:0;top:609px;width:1323px;height:112px;overflow:hidden">
<div class="a" style="left:0;top:-5.9px;width:1323px;height:19.5px;background:#f5f5f5"></div>
<div class="a" style="left:8px;top:-1.4px;width:10px;height:10px;border:1px solid #8a8a8a;border-radius:1px;background:#fff"></div>
<div class="t" style="left:24px;top:0.1px;font-size:11.5px;color:#303030">hourly.php</div>
<div class="t" style="left:432px;top:0.1px;font-size:11.5px;color:#222">200</div>
<div class="t" style="left:560px;top:0.1px;font-size:11.5px;color:#303030">xhr</div>
<div class="t" style="left:688px;top:0.1px;font-size:11px;color:#303030;text-decoration:underline">jquery.min.js:2</div>
<div class="t" style="left:897px;width:124px;text-align:right;top:0.1px;font-size:11.5px;color:#303030">124 B</div>
<div class="t" style="left:1025px;width:124px;text-align:right;top:0.1px;font-size:11.5px;color:#222">2.46 s</div>
<div class="a" style="left:0;top:13.6px;width:1323px;height:19.5px;background:#fff"></div>
<div class="a" style="left:8px;top:18.1px;width:10px;height:10px;border:1px solid #8a8a8a;border-radius:1px;background:#fff"></div>
<div class="t" style="left:24px;top:19.6px;font-size:11.5px;color:#303030">hourly.php</div>
<div class="t" style="left:432px;top:19.6px;font-size:11.5px;color:#222">200</div>
<div class="t" style="left:560px;top:19.6px;font-size:11.5px;color:#303030">xhr</div>
<div class="t" style="left:688px;top:19.6px;font-size:11px;color:#303030;text-decoration:underline">jquery.min.js:2</div>
<div class="t" style="left:897px;width:124px;text-align:right;top:19.6px;font-size:11.5px;color:#303030">214 B</div>
<div class="t" style="left:1025px;width:124px;text-align:right;top:19.6px;font-size:11.5px;color:#222">2.54 s</div>
<div class="a" style="left:0;top:33.1px;width:1323px;height:19.5px;background:#f5f5f5"></div>
<div class="a" style="left:8px;top:37.6px;width:10px;height:10px;border:1px solid #8a8a8a;border-radius:1px;background:#fff"></div>
<div class="t" style="left:24px;top:39.1px;font-size:11.5px;color:#303030">hourly.php</div>
<div class="t" style="left:432px;top:39.1px;font-size:11.5px;color:#222">200</div>
<div class="t" style="left:560px;top:39.1px;font-size:11.5px;color:#303030">xhr</div>
<div class="t" style="left:688px;top:39.1px;font-size:11px;color:#303030;text-decoration:underline">jquery.min.js:2</div>
<div class="t" style="left:897px;width:124px;text-align:right;top:39.1px;font-size:11.5px;color:#303030">124 B</div>
<div class="t" style="left:1025px;width:124px;text-align:right;top:39.1px;font-size:11.5px;color:#222">2.41 s</div>
<div class="a" style="left:0;top:52.6px;width:1323px;height:19.5px;background:#fff"></div>
<div class="a" style="left:8px;top:57.1px;width:10px;height:10px;border:1px solid #8a8a8a;border-radius:1px;background:#fff"></div>
<div class="t" style="left:24px;top:58.6px;font-size:11.5px;color:#303030">hourly.php</div>
<div class="t" style="left:432px;top:58.6px;font-size:11.5px;color:#222">200</div>
<div class="t" style="left:560px;top:58.6px;font-size:11.5px;color:#303030">xhr</div>
<div class="t" style="left:688px;top:58.6px;font-size:11px;color:#303030;text-decoration:underline">jquery.min.js:2</div>
<div class="t" style="left:897px;width:124px;text-align:right;top:58.6px;font-size:11.5px;color:#303030">214 B</div>
<div class="t" style="left:1025px;width:124px;text-align:right;top:58.6px;font-size:11.5px;color:#222">2.35 s</div>
<div class="a" style="left:0;top:72.1px;width:1323px;height:19.5px;background:#f5f5f5"></div>
<div class="a" style="left:8px;top:76.6px;width:10px;height:10px;border:1px solid #8a8a8a;border-radius:1px;background:#fff"></div>
<div class="t" style="left:24px;top:78.1px;font-size:11.5px;color:#303030">hourly.php</div>
<div class="t" style="left:432px;top:78.1px;font-size:11.5px;color:#222">200</div>
<div class="t" style="left:560px;top:78.1px;font-size:11.5px;color:#303030">xhr</div>
<div class="t" style="left:688px;top:78.1px;font-size:11px;color:#303030;text-decoration:underline">jquery.min.js:2</div>
<div class="t" style="left:897px;width:124px;text-align:right;top:78.1px;font-size:11.5px;color:#303030">124 B</div>
<div class="t" style="left:1025px;width:124px;text-align:right;top:78.1px;font-size:11.5px;color:#222">2.05 s</div>
<div class="a" style="left:0;top:91.6px;width:1323px;height:19.5px;background:#fff"></div>
<div class="a" style="left:8px;top:96.1px;width:10px;height:10px;border:1px solid #8a8a8a;border-radius:1px;background:#fff"></div>
<div class="t" style="left:24px;top:97.6px;font-size:11.5px;color:#303030">hourly.php</div>
<div class="t" style="left:432px;top:97.6px;font-size:11.5px;color:#5f6368">(pending)</div>
<div class="t" style="left:560px;top:97.6px;font-size:11.5px;color:#303030">xhr</div>
<div class="t" style="left:688px;top:97.6px;font-size:11px;color:#303030;text-decoration:underline">jquery.min.js:2</div>
<div class="t" style="left:897px;width:124px;text-align:right;top:97.6px;font-size:11.5px;color:#303030">0 B</div>
<div class="t" style="left:1025px;width:124px;text-align:right;top:97.6px;font-size:11.5px;color:#5f6368">Pending</div>
<div class="a" style="left:428px;top:0;width:1px;height:113px;background:#cacdd1"></div>
<div class="a" style="left:556px;top:0;width:1px;height:113px;background:#cacdd1"></div>
<div class="a" style="left:684px;top:0;width:1px;height:113px;background:#cacdd1"></div>
<div class="a" style="left:897px;top:0;width:1px;height:113px;background:#cacdd1"></div>
<div class="a" style="left:1025px;top:0;width:1px;height:113px;background:#cacdd1"></div>
<div class="a" style="left:1153px;top:0;width:1px;height:113px;background:#cacdd1"></div>
<div class="a" style="left:1266px;top:0;width:1px;height:113px;background:#e6e6e6"></div>
<div class="a" style="left:1178px;top:0;width:1px;height:113px;background:#7a6aa8"></div>
<div class="a" style="left:1179px;top:0;width:1px;height:113px;background:#b5484f"></div>
<div class="a" style="left:1261px;top:1.1px;width:1px;height:5px;background:#bbb"></div>
<div class="a" style="left:1268px;top:-1.9px;width:2px;height:11px;background:#12a5a5"></div>
<div class="a" style="left:1280px;top:20.6px;width:1px;height:5px;background:#bbb"></div>
<div class="a" style="left:1289px;top:17.6px;width:2px;height:11px;background:#12a5a5"></div>
<div class="a" style="left:1290px;top:17.6px;width:2px;height:11px;background:#2aa8e0"></div>
<div class="a" style="left:1283px;top:40.1px;width:1px;height:5px;background:#bbb"></div>
<div class="a" style="left:1290px;top:37.1px;width:2px;height:11px;background:#2aa8e0"></div>
<div class="a" style="left:1301px;top:59.6px;width:1px;height:5px;background:#bbb"></div>
<div class="a" style="left:1304px;top:56.6px;width:2px;height:11px;background:#e0a060"></div>
<div class="a" style="left:1310px;top:56.6px;width:2px;height:11px;background:#12a5a5"></div>
<div class="a" style="left:1305px;top:79.1px;width:1px;height:5px;background:#bbb"></div>
<div class="a" style="left:1310px;top:76.1px;width:2px;height:11px;background:#12a5a5"></div>
</div>
<div class="a" style="left:1323px;top:609px;width:15px;height:112px;background:#f1f1f1"></div>
<svg class="a" style="left:1326px;top:614px" width="9" height="5" viewBox="0 0 9 5"><path d="M4.5 0L9 5H0Z" fill="#505050"/></svg>
<div class="a" style="left:1325px;top:689px;width:12px;height:16px;background:#c1c1c1"></div>
<svg class="a" style="left:1326px;top:710px" width="9" height="5" viewBox="0 0 9 5"><path d="M4.5 5L9 0H0Z" fill="#a3a3a3"/></svg>
<div class="a" style="left:1338px;top:583px;width:2px;height:163px;background:#d0d0d0"></div>
<div class="a" style="left:0;top:721px;width:1340px;height:25px;background:#f1f3f4;border-top:1px solid #cacdd1"></div>
<div class="t" style="left:10px;top:729.5px;font-size:11px;color:#5f6368;letter-spacing:-0.1px">51 requests</div>
<div class="t" style="left:84px;top:729.5px;font-size:11px;color:#5f6368;letter-spacing:-0.1px">2.5 MB transferred</div>
<div class="t" style="left:193px;top:729.5px;font-size:11px;color:#5f6368;letter-spacing:-0.1px">3.7 MB resources</div>
<div class="t" style="left:295px;top:729.5px;font-size:11px;color:#5f6368;letter-spacing:-0.1px">Finish: 1.2 min</div>
<div class="t" style="left:382px;top:729.5px;font-size:11px;color:#1a73e8;letter-spacing:-0.1px">DOMContentLoaded: 9.29 s</div>
<div class="t" style="left:536px;top:729.5px;font-size:11px;color:#c5221f;letter-spacing:-0.1px">Load: 9.43 s</div>
<div class="a" style="left:75px;top:727px;width:1px;height:14px;background:#ccc"></div>
<div class="a" style="left:184px;top:727px;width:1px;height:14px;background:#ccc"></div>
<div class="a" style="left:286px;top:727px;width:1px;height:14px;background:#ccc"></div>
<div class="a" style="left:374px;top:727px;width:1px;height:14px;background:#ccc"></div>
<div class="a" style="left:527px;top:727px;width:1px;height:14px;background:#ccc"></div>
<div class="a" style="left:0;top:746px;width:1340px;height:54px;background:#1b365d"></div>
<div class="a" style="left:18px;top:765px;width:15px;height:15px;background:#fff;border-radius:1px"></div><div class="a" style="left:17px;top:770px;width:17px;height:7px;background:#e2231a;color:#fff;font-size:6px;font-weight:bold;line-height:7px;text-align:center">PDF</div>
<div class="t" style="left:46px;top:768.5px;font-size:12px;color:#e8eaed">Individual ( Consu....pdf</div>
<svg class="a" style="left:192px;top:770px" width="12" height="7" viewBox="0 0 12 7"><path d="M1 6L6 1L11 6" stroke="#aab4c4" stroke-width="1.5" fill="none"/></svg>
<div class="a" style="left:220px;top:754px;width:1px;height:38px;background:#2f4a70"></div>
<div class="a" style="left:235px;top:765px;width:15px;height:15px;background:#fff;border-radius:1px"></div><div class="a" style="left:234px;top:770px;width:17px;height:7px;background:#e2231a;color:#fff;font-size:6px;font-weight:bold;line-height:7px;text-align:center">PDF</div>
<div class="t" style="left:262px;top:768.5px;font-size:12px;color:#e8eaed">Individual ( Consu....pdf</div>
<svg class="a" style="left:409px;top:770px" width="12" height="7" viewBox="0 0 12 7"><path d="M1 6L6 1L11 6" stroke="#aab4c4" stroke-width="1.5" fill="none"/></svg>
<div class="a" style="left:437px;top:754px;width:1px;height:38px;background:#2f4a70"></div>
<div class="a" style="left:453px;top:765px;width:12px;height:15px;background:#fff;border-radius:1px"></div><div class="a" style="left:456px;top:771px;width:6px;height:5px;background:#3b6bb5"></div>
<div class="a" style="left:871px;top:754px;width:1px;height:38px;background:#2f4a70"></div>
<div class="a" style="left:479px;top:753px;width:382px;height:39px;background:#f6f7f8"></div>
<div class="a" style="left:490px;top:766px;width:1px;height:11px;background:#aaa"></div><div class="a" style="left:493px;top:766px;width:1px;height:11px;background:#aaa"></div>
<div class="t" style="left:503px;top:766px;font-size:11px;color:#202124">srilance.softileo.com is sharing your screen.</div>
<div class="a" style="left:725px;top:757px;width:94px;height:30px;border-radius:3px;background:#1a73e8"></div>
<div class="t" style="left:739px;top:766px;font-size:10.6px;font-weight:bold;color:#fff">Stop sharing</div>
<div class="t" style="left:829px;top:766px;font-size:11.2px;color:#1a73e8">Hide</div>
<div class="a" style="left:1234px;top:758px;width:72px;height:30px;border:1px solid #8a9bb5;border-radius:4px;background:#213d65"></div>
<div class="t" style="left:1249px;top:767px;font-size:10.5px;font-weight:bold;color:#fff">Show all</div>
<svg class="a" style="left:1317px;top:767px" width="12" height="12" viewBox="0 0 12 12"><path d="M1.5 1.5L10.5 10.5M10.5 1.5L1.5 10.5" stroke="#c8d0dc" stroke-width="1.6"/></svg>
<div class="a" style="left:0;top:800px;width:1340px;height:37px;background:#262626"></div>
<svg class="a" style="left:14px;top:811px" width="16" height="16" viewBox="0 0 16 16"><path d="M0 2.2L6.5 1.3V7.5H0ZM7.5 1.2L16 0V7.5H7.5ZM0 8.5H6.5V14.7L0 13.8ZM7.5 8.5H16V16L7.5 14.8Z" fill="#fff"/></svg>
<div class="a" style="left:45px;top:800px;width:320px;height:37px;background:#f0f0f0"></div>
<svg class="a" style="left:56px;top:809px" width="18" height="18" viewBox="0 0 18 18"><circle cx="11" cy="7" r="5.5" stroke="#333" stroke-width="1.5" fill="none"/><path d="M7 11L1.5 16.5" stroke="#333" stroke-width="1.6"/></svg>
<div class="t" style="left:82px;top:812.5px;font-size:13.5px;color:#333">Type here to search</div>
<div class="a" style="left:379px;top:811px;width:15px;height:15px;border-radius:50%;border:1.8px solid #fff"></div>
<svg class="a" style="left:423px;top:810px" width="18" height="17" viewBox="0 0 18 17"><rect x="2.5" y="3.5" width="9" height="9" stroke="#fff" stroke-width="1.3" fill="none"/><path d="M0.5 1.5H13.5M0.5 14.5H13.5M15.5 2V15" stroke="#fff" stroke-width="1.3"/><circle cx="15.5" cy="4" r="1.5" fill="#fff"/></svg>
<div class="a" style="left:468px;top:807px;width:22px;height:22px;background:#3a3a3a;border-radius:2px"></div>
<svg class="a" style="left:471px;top:810px" width="16" height="16" viewBox="0 0 16 16"><path d="M3 3.5L13 0.5V4.5L3 7.5ZM3 7.5L13 10.5V6.5ZM3 11.5L13 8.5V12.5L3 15.5Z" fill="#ff9800"/></svg>
<div class="a" style="left:461px;top:835px;width:37px;height:2px;background:#76b9ed"></div>
<div class="a" style="left:514px;top:810px;width:21px;height:16px;background:#f8d775"></div><div class="a" style="left:514px;top:808px;width:9px;height:3px;background:#e8b84a"></div><div class="a" style="left:519px;top:817px;width:11px;height:9px;border:2.5px solid #2b8ad8;border-bottom:none;background:transparent"></div>
<div class="a" style="left:506px;top:835px;width:37px;height:2px;background:#76b9ed"></div>
<div class="a" style="left:561px;top:811px;width:20px;height:12px;border-radius:50%;background:#f5f5f5;border:2px solid #e24a4a;transform:rotate(-20deg)"></div>
<svg class="a" style="left:565px;top:813px" width="14" height="14" viewBox="0 0 14 14"><path d="M2 1L9 9M12 1L5 9" stroke="#777" stroke-width="1.2"/><circle cx="4" cy="11" r="2.2" stroke="#2a7fd0" stroke-width="1.5" fill="none"/><circle cx="10" cy="11" r="2.2" stroke="#2a7fd0" stroke-width="1.5" fill="none"/></svg>
<div class="a" style="left:594px;top:800px;width:42px;height:37px;background:#434343"></div>
<div class="a" style="left:636px;top:800px;width:2px;height:37px;background:#3a3a3a"></div>
<div class="a" style="left:594px;top:835px;width:44px;height:2px;background:#76b9ed"></div>
<div class="a" style="left:605px;top:807px;width:20px;height:20px;border-radius:50%;background:conic-gradient(from -60deg,#db4437 0 120deg,#0f9d58 120deg 240deg,#f4b400 240deg 360deg)"></div><div class="a" style="left:610.5px;top:812.5px;width:9px;height:9px;border-radius:50%;background:#4285f4;border:1.5px solid #fff"></div>
<div class="a" style="left:613px;top:817px;width:13px;height:13px;border-radius:50%;background:#e8e8e8;border:1px solid #555"></div><div class="a" style="left:617.5px;top:819.5px;width:4px;height:4px;border-radius:50%;background:#666"></div><div class="a" style="left:616px;top:824px;width:7px;height:3px;border-radius:3px 3px 0 0;background:#666"></div>
<div class="a" style="left:651px;top:807px;width:21px;height:22px;background:#bf0000;color:#fff;font-size:15px;font-weight:bold;font-style:italic;line-height:22px;text-align:center;letter-spacing:-1px">Fz</div>
<div class="a" style="left:643px;top:835px;width:37px;height:2px;background:#76b9ed"></div>
<div class="a" style="left:697px;top:808px;width:20px;height:20px;background:linear-gradient(#eaf1fb,#c7daf3);border-radius:1px"></div>
<div class="t" style="left:697px;top:810px;font-size:14px;font-weight:bold;color:#2457a8;letter-spacing:-1px">W</div>
<div class="a" style="left:731px;top:800px;width:44px;height:37px;background:#a5652c"></div>
<div class="a" style="left:731px;top:835px;width:44px;height:2px;background:#f4862a"></div>
<div class="a" style="left:742px;top:807px;width:21px;height:21px;background:#ffd500"></div>
<svg class="a" style="left:752px;top:817px" width="11" height="11" viewBox="0 0 11 11"><path d="M9 1V9H1Z" fill="#333"/></svg>
<div class="a" style="left:788px;top:807px;width:20px;height:20px;border-radius:50%;background:conic-gradient(from -60deg,#db4437 0 120deg,#0f9d58 120deg 240deg,#f4b400 240deg 360deg)"></div><div class="a" style="left:793.5px;top:812.5px;width:9px;height:9px;border-radius:50%;background:#4285f4;border:1.5px solid #fff"></div>
<div class="a" style="left:797px;top:817px;width:13px;height:13px;border-radius:50%;background:#222"></div><div class="a" style="left:801.5px;top:819.5px;width:4px;height:4px;border-radius:50%;background:#fff"></div><div class="a" style="left:800px;top:824px;width:7px;height:3px;border-radius:3px 3px 0 0;background:#fff"></div>
<div class="a" style="left:780px;top:835px;width:37px;height:2px;background:#76b9ed"></div>
<div class="a" style="left:1056px;top:810px;width:17px;height:17px;border-radius:50%;background:radial-gradient(circle at 40% 35%,#ffe066,#fdb813 70%,#f39c12)"></div>
<div class="t" style="left:1083px;top:813px;font-size:12.2px;color:#fff">32°C</div>
<div class="t" style="left:1118px;top:813px;font-size:12.3px;color:#fff">Sunny</div>
<svg class="a" style="left:1169px;top:813px" width="12" height="8" viewBox="0 0 12 8"><path d="M1 7L6 1.5L11 7" stroke="#fff" stroke-width="1.3" fill="none"/></svg>
<svg class="a" style="left:1189px;top:810px" width="17" height="16" viewBox="0 0 17 16"><rect x="3.5" y="1.5" width="12" height="9" stroke="#fff" stroke-width="1.1" fill="none"/><path d="M9.5 10.5V14M6 14.5H13M1.5 4V13" stroke="#fff" stroke-width="1.1"/><rect x="0.5" y="1" width="3" height="3" fill="#fff"/></svg>
<svg class="a" style="left:1212px;top:810px" width="17" height="16" viewBox="0 0 17 16"><path d="M1 5.5H4L8 2V14L4 10.5H1Z" stroke="#fff" stroke-width="1.1" fill="none"/><path d="M10.5 5.5A3 3 0 0 1 10.5 10.5M12.5 3.5A6 6 0 0 1 12.5 12.5M14.5 1.5A9 9 0 0 1 14.5 14.5" stroke="#fff" stroke-width="1.1" fill="none"/></svg>
<div class="t" style="left:1241px;top:804px;font-size:10.5px;color:#fff">5:53 PM</div>
<div class="t" style="left:1237px;top:821px;font-size:10.6px;color:#fff">10/9/2021</div>
<svg class="a" style="left:1300px;top:806px" width="26" height="26" viewBox="0 0 26 26"><path d="M2 2.5H18V14H8L4 17.5V14H2Z" stroke="#fff" stroke-width="1.3" fill="none"/><path d="M5 6H15M5 9H15M5 12H11" stroke="#fff" stroke-width="1.1"/><circle cx="16.5" cy="18.5" r="6.2" fill="#262626" stroke="#bbb" stroke-width="1"/></svg>
<div class="t" style="left:1312px;top:820px;width:9px;text-align:center;font-size:9.5px;font-weight:bold;color:#fff">2</div>
<div class="a" style="left:1334px;top:800px;width:1px;height:37px;background:#555"></div>
<svg class="a" style="left:802px;top:590px" width="13" height="20" viewBox="0 0 13 20"><path d="M0.5 0.5V16.5L4.3 12.8L6.8 18.8L9.2 17.8L6.8 12H12Z" fill="#fff" stroke="#000" stroke-width="1"/></svg>
</body></html>
